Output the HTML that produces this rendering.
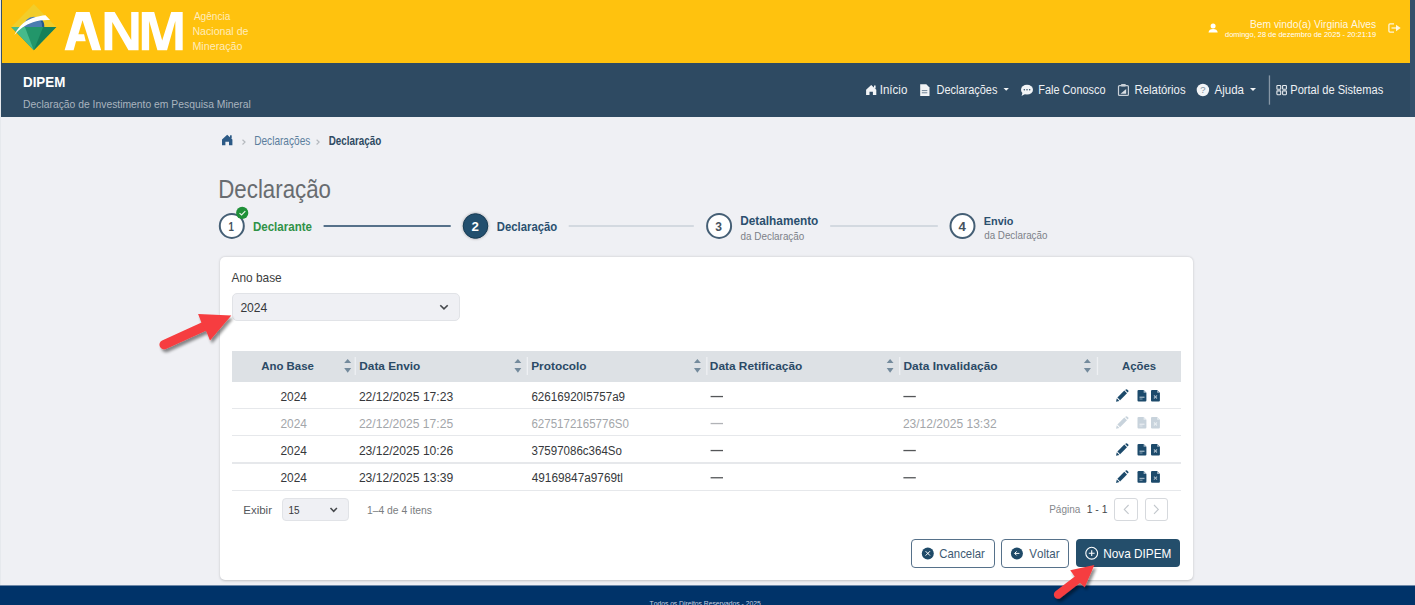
<!DOCTYPE html>
<html><head><meta charset="utf-8">
<style>
*{margin:0;padding:0;box-sizing:border-box}
html,body{width:1415px;height:605px;overflow:hidden}
body{font-family:"Liberation Sans",sans-serif;background:#eff0f4;position:relative;color:#333}
.a{position:absolute}
svg text{font-family:"Liberation Sans",sans-serif;font-kerning:none;white-space:pre}
</style></head><body>
<div class="a" style="left:0;top:0;width:1415px;height:62.5px;background:#ffc20e"></div>
<div class="a" style="left:0;top:62.5px;width:1415px;height:54.5px;background:#2e4a62"></div>
<div class="a" style="left:1px;top:0;width:1px;height:63px;background:#34506a"></div>
<div class="a" style="left:0;top:0;width:1px;height:605px;background:#e6e9ed"></div>
<div class="a" style="left:0;top:585px;width:1415px;height:20px;background:#003369;border-top:1px solid #6f89a8"></div>
<div class="a" style="left:1409.5px;top:0;width:6px;height:117px;background:#34506b"></div>

<!-- card -->
<div class="a" style="left:220px;top:257px;width:972.6px;height:323px;background:#fff;border-radius:5px;box-shadow:0 0.5px 2.5px rgba(0,0,0,.2)"></div>
<!-- select -->
<div class="a" style="left:232.3px;top:292.8px;width:227.6px;height:28.7px;background:#eff0f4;border:1px solid #e1e3e7;border-radius:5px"></div>
<!-- table header -->
<div class="a" style="left:231.9px;top:350.8px;width:948.8px;height:31.2px;background:#dde1e5"></div>
<div class="a" style="left:231.9px;top:408px;width:948.8px;height:1.3px;background:#e6e8eb"></div>
<div class="a" style="left:231.9px;top:435.1px;width:948.8px;height:1.3px;background:#e6e8eb"></div>
<div class="a" style="left:231.9px;top:462.4px;width:948.8px;height:1.3px;background:#e6e8eb"></div>
<div class="a" style="left:231.9px;top:489.7px;width:948.8px;height:1.3px;background:#e6e8eb"></div>
<!-- page size select -->
<div class="a" style="left:282.2px;top:498.2px;width:66.8px;height:22.7px;background:#eff0f4;border:1px solid #e1e3e7;border-radius:4px"></div>
<!-- pager buttons -->
<div class="a" style="left:1114.2px;top:497.6px;width:23.9px;height:23.2px;border:1.3px solid #d6d9dd;border-radius:3px"></div>
<div class="a" style="left:1144.5px;top:497.6px;width:23.8px;height:23.2px;border:1.3px solid #d6d9dd;border-radius:3px"></div>
<!-- buttons -->
<div class="a" style="left:911.2px;top:539px;width:83.7px;height:28.5px;border:1.3px solid #56718a;border-radius:4px"></div>
<div class="a" style="left:1001.2px;top:539px;width:68.2px;height:28.5px;border:1.3px solid #56718a;border-radius:4px"></div>
<div class="a" style="left:1076.2px;top:538.9px;width:104.2px;height:28.3px;background:#244e6b;border-radius:4px"></div>

<svg class="a" style="left:0;top:0" width="1415" height="605" viewBox="0 0 1415 605">
<defs>
  <filter id="sh" x="-30%" y="-30%" width="160%" height="160%"><feGaussianBlur in="SourceAlpha" stdDeviation="1.6"/><feOffset dx="1.5" dy="2.5"/><feComponentTransfer><feFuncA type="linear" slope="0.45"/></feComponentTransfer><feMerge><feMergeNode/><feMergeNode in="SourceGraphic"/></feMerge></filter>
  <filter id="glow" x="-50%" y="-50%" width="200%" height="200%"><feGaussianBlur in="SourceAlpha" stdDeviation="1.5"/><feComponentTransfer><feFuncA type="linear" slope="0.35"/></feComponentTransfer><feMerge><feMergeNode/><feMergeNode in="SourceGraphic"/></feMerge></filter>
</defs>
<!-- logo -->
<polygon points="33.8,4.1 56.3,27.1 11.3,27.1" fill="#f2cd2a"/>
<path d="M23.6,27.1 A10.3,10.3 0 0 1 44.2,27.1 Z" fill="#4a7db0"/>
<path d="M41.5,19 A10.3,10.3 0 0 1 44.2,27.1 L42.2,27.1 A9,9 0 0 0 40,20 Z" fill="#24598c"/>
<polygon points="11.3,27.1 56.3,27.1 33.8,50.2" fill="#22966a"/>
<polygon points="11.3,27.1 24.9,27.1 33.8,50.2" fill="#46ba8b"/>
<polygon points="43.2,27.1 56.3,27.1 33.8,50.2" fill="#168059"/>
<path d="M14.4,35.1 C17,29 23,21.5 32,18.3 C37,16.5 42,15.5 45.5,15.3 L50.1,20.1 C44,19.8 38,20.5 33,22.3 C25,25 19,29.5 14.4,35.1 Z" fill="#ffffff"/>
<g transform="translate(60,5) scale(0.0919)" fill="#ffffff">
<polygon points="50,492 175,75 322,75 448,492 350,492 245,165 200,318 262,318 280,395 175,395 148,492"/>
<polygon points="485,492 485,75 595,75 775,380 775,75 855,75 855,492 745,492 569,185 569,492"/>
<polygon points="890,492 890,75 1025,75 1112,385 1210,75 1335,75 1335,492 1255,492 1255,175 1165,492 1060,492 970,175 970,492"/>
</g>
<!-- user icon -->
<circle cx="1213.1" cy="25.9" r="2.5" fill="#fff"/>
<path d="M1208.5,32.5 C1208.8,29.9 1210.5,28.9 1213.1,28.9 C1215.7,28.9 1217.4,29.9 1217.7,32.5 Z" fill="#fff"/>
<!-- logout -->
<g fill="none" stroke="rgba(255,255,255,.85)" stroke-width="1.3">
<path d="M1394,23.9 H1390 Q1388.9,23.9 1388.9,25 V31 Q1388.9,32.1 1390,32.1 H1394"/>
<path d="M1391.5,28 H1397"/>
</g>
<polygon points="1396,24.8 1400.7,28 1396,31.2" fill="rgba(255,255,255,.85)"/>

<!-- nav icons -->
<g fill="#f2f4f6">
<path d="M871.2,85 L876.3,89.8 L876.3,95 L872.9,95 L872.9,91.7 L869.5,91.7 L869.5,95 L866.1,95 L866.1,89.8 Z"/>
<rect x="874" y="85.5" width="1.6" height="3" />
<path d="M920.2,84.2 H926.3 L929.5,87.4 V96 H920.2 Z"/>
<ellipse cx="1027" cy="89.7" rx="6" ry="4.9"/>
<path d="M1022.5,92.5 L1021.6,96 L1025.5,93.8 Z"/>
<circle cx="1202.9" cy="90" r="6.2"/>
<polygon points="1003.5,88 1008.9,88 1006.2,90.8"/>
<polygon points="1250,88 1256,88 1253,91"/>
</g>
<g fill="#7d8fa0"><rect x="921.8" y="90" width="5.5" height="1.1"/><rect x="921.8" y="92.2" width="5.5" height="1.1"/></g>
<g fill="#2e4a62"><circle cx="1024.3" cy="89.8" r="0.75"/><circle cx="1027" cy="89.8" r="0.75"/><circle cx="1029.7" cy="89.8" r="0.75"/></g>
<text x="1202.9" y="93.4" font-size="9.5" fill="#7f90a0" text-anchor="middle">?</text>
<g fill="none" stroke="#c9d0d7" stroke-width="1.2">
<rect x="1118.5" y="85.6" width="9.9" height="9.8" rx="1"/>
<rect x="1274" y="0" width="0" height="0"/>
</g>
<rect x="1121" y="84" width="4.8" height="2.6" rx="0.8" fill="#c9d0d7"/>
<polygon points="1120.5,93.7 1126.2,89 1126.2,93.7" fill="#d9dee3"/>
<rect x="1268.8" y="75.4" width="1.3" height="29.3" fill="#8797a6"/>
<g fill="none" stroke="#e6eaee" stroke-width="1.1">
<rect x="1276.9" y="85.5" width="3.8" height="3.8" rx="0.6"/>
<rect x="1282.6" y="85.5" width="3.8" height="3.8" rx="0.6"/>
<rect x="1276.9" y="90.9" width="3.8" height="3.8" rx="0.6"/>
<rect x="1282.6" y="90.9" width="3.8" height="3.8" rx="0.6"/>
</g>

<!-- breadcrumb -->
<path d="M227.2,134.7 L232.4,139.6 L232.4,145.3 L229,145.3 L229,141.8 L225.4,141.8 L225.4,145.3 L222,145.3 L222,139.6 Z" fill="#2c5a86"/>
<rect x="230" y="135.3" width="1.7" height="3.2" fill="#2c5a86"/>
<path d="M242.5,139.8 L245,142.1 L242.5,144.5" fill="none" stroke="#b5b9be" stroke-width="1.2"/>
<path d="M316.6,139.8 L319.1,142.1 L316.6,144.5" fill="none" stroke="#b5b9be" stroke-width="1.2"/>

<!-- stepper -->
<rect x="323.6" y="225" width="127.1" height="2" fill="#56718a"/>
<rect x="568.7" y="225" width="125.1" height="2" fill="#d3d9e0"/>
<rect x="830.2" y="225" width="107.6" height="2" fill="#d3d9e0"/>
<circle cx="231.8" cy="225.9" r="12" fill="#fff" stroke="#455f75" stroke-width="2"/>
<circle cx="475.5" cy="226" r="12.3" fill="#234f6e" stroke="#183b53" stroke-width="1" filter="url(#glow)"/>
<circle cx="719.1" cy="225.9" r="12" fill="#fff" stroke="#455f75" stroke-width="2"/>
<circle cx="962.5" cy="226" r="12" fill="#fff" stroke="#455f75" stroke-width="2"/>
<circle cx="242.2" cy="212.9" r="6.1" fill="#1f9038"/>
<path d="M239.5,213.1 L241.6,215 L245.3,211.2" fill="none" stroke="#e8f3ea" stroke-width="1.2"/>

<!-- select chevrons -->
<path d="M440.3,305.2 L444,308.8 L447.7,305.2" fill="none" stroke="#45484c" stroke-width="1.6"/>
<path d="M330.5,508 L333.7,511.3 L336.9,508" fill="none" stroke="#45484c" stroke-width="1.5"/>
<!-- pager chevrons -->
<path d="M1128.6,505 L1124.3,509.4 L1128.6,513.8" fill="none" stroke="#c2c7cc" stroke-width="1.1"/>
<path d="M1154,505 L1158.3,509.4 L1154,513.8" fill="none" stroke="#c2c7cc" stroke-width="1.1"/>

<!-- sort icons -->
<g fill="#738a9c">
<polygon points="344.2,363 351.2,363 347.7,358.9"/><polygon points="344.2,368 351.2,368 347.7,372.8"/>
<polygon points="514.4,363 521.3,363 517.9,358.9"/><polygon points="514.4,368 521.3,368 517.9,372.8"/>
<polygon points="694,363 700.9,363 697.4,358.9"/><polygon points="694,368 700.9,368 697.4,372.8"/>
<polygon points="886.7,363 893.5,363 890.1,358.9"/><polygon points="886.7,368 893.5,368 890.1,372.8"/>
<polygon points="1083.9,363 1090.9,363 1087.4,358.9"/><polygon points="1083.9,368 1090.9,368 1087.4,372.8"/>
</g>
<g fill="#eef0f3">
<rect x="354.6" y="357" width="1.3" height="18"/>
<rect x="526.7" y="357" width="1.3" height="18"/>
<rect x="706.2" y="357" width="1.3" height="18"/>
<rect x="899" y="357" width="1.3" height="18"/>
<rect x="1096.8" y="357" width="1.3" height="18"/>
</g>

<!-- action icons -->
<g transform="translate(0,0.0)"><g fill="#1c4a6b">
<path d="M1116,401.7 L1116.8,398.2 L1119.4,400.9 Z"/>
<path d="M1117.4,397.5 L1124.3,390.6 L1127,393.3 L1120.1,400.2 Z"/>
<path d="M1125.1,389.9 L1125.9,389.4 Q1126.5,388.9 1127.1,389.4 L1128.3,390.6 Q1128.8,391.2 1128.3,391.8 L1127.6,392.4 Z"/>
<path d="M1138.6,389.9 H1143.6 L1146.4,392.7 V400.5 Q1146.4,401.6 1145.3,401.6 H1138.6 Q1137.5,401.6 1137.5,400.5 V391 Q1137.5,389.9 1138.6,389.9 Z"/>
<path d="M1152.1,389.9 H1157.1 L1159.9,392.7 V400.5 Q1159.9,401.6 1158.8,401.6 H1152.1 Q1151,401.6 1151,400.5 V391 Q1151,389.9 1152.1,389.9 Z"/>
</g><g fill="#9fb3c3"><path d="M1143.6,389.9 V392.7 H1146.4 Z"/><path d="M1157.1,389.9 V392.7 H1159.9 Z"/><rect x="1139.5" y="396.6" width="5" height="1.3"/><rect x="1139.5" y="398.6" width="3" height="0.8"/></g>
<path d="M1153.9,395.4 L1157,398.5 M1157,395.4 L1153.9,398.5" stroke="#9fb3c3" stroke-width="1.1"/></g>
<g transform="translate(0,27.0)"><g fill="#c8d3dc">
<path d="M1116,401.7 L1116.8,398.2 L1119.4,400.9 Z"/>
<path d="M1117.4,397.5 L1124.3,390.6 L1127,393.3 L1120.1,400.2 Z"/>
<path d="M1125.1,389.9 L1125.9,389.4 Q1126.5,388.9 1127.1,389.4 L1128.3,390.6 Q1128.8,391.2 1128.3,391.8 L1127.6,392.4 Z"/>
<path d="M1138.6,389.9 H1143.6 L1146.4,392.7 V400.5 Q1146.4,401.6 1145.3,401.6 H1138.6 Q1137.5,401.6 1137.5,400.5 V391 Q1137.5,389.9 1138.6,389.9 Z"/>
<path d="M1152.1,389.9 H1157.1 L1159.9,392.7 V400.5 Q1159.9,401.6 1158.8,401.6 H1152.1 Q1151,401.6 1151,400.5 V391 Q1151,389.9 1152.1,389.9 Z"/>
</g><g fill="#e6ecf0"><path d="M1143.6,389.9 V392.7 H1146.4 Z"/><path d="M1157.1,389.9 V392.7 H1159.9 Z"/><rect x="1139.5" y="396.6" width="5" height="1.3"/><rect x="1139.5" y="398.6" width="3" height="0.8"/></g>
<path d="M1153.9,395.4 L1157,398.5 M1157,395.4 L1153.9,398.5" stroke="#e6ecf0" stroke-width="1.1"/></g>
<g transform="translate(0,54.0)"><g fill="#1c4a6b">
<path d="M1116,401.7 L1116.8,398.2 L1119.4,400.9 Z"/>
<path d="M1117.4,397.5 L1124.3,390.6 L1127,393.3 L1120.1,400.2 Z"/>
<path d="M1125.1,389.9 L1125.9,389.4 Q1126.5,388.9 1127.1,389.4 L1128.3,390.6 Q1128.8,391.2 1128.3,391.8 L1127.6,392.4 Z"/>
<path d="M1138.6,389.9 H1143.6 L1146.4,392.7 V400.5 Q1146.4,401.6 1145.3,401.6 H1138.6 Q1137.5,401.6 1137.5,400.5 V391 Q1137.5,389.9 1138.6,389.9 Z"/>
<path d="M1152.1,389.9 H1157.1 L1159.9,392.7 V400.5 Q1159.9,401.6 1158.8,401.6 H1152.1 Q1151,401.6 1151,400.5 V391 Q1151,389.9 1152.1,389.9 Z"/>
</g><g fill="#9fb3c3"><path d="M1143.6,389.9 V392.7 H1146.4 Z"/><path d="M1157.1,389.9 V392.7 H1159.9 Z"/><rect x="1139.5" y="396.6" width="5" height="1.3"/><rect x="1139.5" y="398.6" width="3" height="0.8"/></g>
<path d="M1153.9,395.4 L1157,398.5 M1157,395.4 L1153.9,398.5" stroke="#9fb3c3" stroke-width="1.1"/></g>
<g transform="translate(0,81.19999999999999)"><g fill="#1c4a6b">
<path d="M1116,401.7 L1116.8,398.2 L1119.4,400.9 Z"/>
<path d="M1117.4,397.5 L1124.3,390.6 L1127,393.3 L1120.1,400.2 Z"/>
<path d="M1125.1,389.9 L1125.9,389.4 Q1126.5,388.9 1127.1,389.4 L1128.3,390.6 Q1128.8,391.2 1128.3,391.8 L1127.6,392.4 Z"/>
<path d="M1138.6,389.9 H1143.6 L1146.4,392.7 V400.5 Q1146.4,401.6 1145.3,401.6 H1138.6 Q1137.5,401.6 1137.5,400.5 V391 Q1137.5,389.9 1138.6,389.9 Z"/>
<path d="M1152.1,389.9 H1157.1 L1159.9,392.7 V400.5 Q1159.9,401.6 1158.8,401.6 H1152.1 Q1151,401.6 1151,400.5 V391 Q1151,389.9 1152.1,389.9 Z"/>
</g><g fill="#9fb3c3"><path d="M1143.6,389.9 V392.7 H1146.4 Z"/><path d="M1157.1,389.9 V392.7 H1159.9 Z"/><rect x="1139.5" y="396.6" width="5" height="1.3"/><rect x="1139.5" y="398.6" width="3" height="0.8"/></g>
<path d="M1153.9,395.4 L1157,398.5 M1157,395.4 L1153.9,398.5" stroke="#9fb3c3" stroke-width="1.1"/></g>

<!-- button icons -->
<circle cx="927.8" cy="553.4" r="6" fill="#1f4a68"/>
<path d="M925.6,551.2 L930,555.6 M930,551.2 L925.6,555.6" stroke="#fff" stroke-width="1"/>
<circle cx="1016.9" cy="553.4" r="6" fill="#1f4a68"/>
<path d="M1019.4,553.4 H1014.8 M1016.6,551.4 L1014.6,553.4 L1016.6,555.4" fill="none" stroke="#fff" stroke-width="1"/>
<circle cx="1091.7" cy="553.2" r="5.9" fill="none" stroke="#fff" stroke-width="1.1"/>
<path d="M1091.7,550.3 V556.1 M1088.8,553.2 H1094.6" stroke="#fff" stroke-width="1.1"/>

<text x="193.88" y="19.50" font-size="10.76" textLength="36.42" lengthAdjust="spacingAndGlyphs" fill="rgba(255,255,255,.72)" >Agência</text>
<text x="192.43" y="34.60" font-size="10.61" textLength="56.04" lengthAdjust="spacingAndGlyphs" fill="rgba(255,255,255,.72)" >Nacional de</text>
<text x="192.42" y="50.00" font-size="10.76" textLength="50.03" lengthAdjust="spacingAndGlyphs" fill="rgba(255,255,255,.72)" >Mineração</text>
<text x="1249.96" y="27.60" font-size="10.47" textLength="126.21" lengthAdjust="spacingAndGlyphs" fill="rgba(255,255,255,.9)" >Bem vindo(a) Virginia Alves</text>
<text x="1225.09" y="37.00" font-size="7.12" textLength="151.07" lengthAdjust="spacingAndGlyphs" fill="#ffffff" >domingo, 28 de dezembro de 2025 - 20:21:19</text>
<text x="23.01" y="87.40" font-size="14.24" textLength="42.29" lengthAdjust="spacingAndGlyphs" fill="#ffffff" font-weight="bold" >DIPEM</text>
<text x="23.05" y="107.70" font-size="10.47" textLength="227.64" lengthAdjust="spacingAndGlyphs" fill="#a9b4bf" >Declaração de Investimento em Pesquisa Mineral</text>
<text x="879.73" y="94.40" font-size="12.35" textLength="27.65" lengthAdjust="spacingAndGlyphs" fill="#eef1f4" >Início</text>
<text x="936.50" y="94.30" font-size="12.35" textLength="60.89" lengthAdjust="spacingAndGlyphs" fill="#eef1f4" >Declarações</text>
<text x="1038.31" y="94.30" font-size="12.35" textLength="67.15" lengthAdjust="spacingAndGlyphs" fill="#eef1f4" >Fale Conosco</text>
<text x="1134.57" y="94.30" font-size="12.35" textLength="51.04" lengthAdjust="spacingAndGlyphs" fill="#eef1f4" >Relatórios</text>
<text x="1214.58" y="94.30" font-size="12.35" textLength="29.42" lengthAdjust="spacingAndGlyphs" fill="#eef1f4" >Ajuda</text>
<text x="1290.29" y="94.00" font-size="12.50" textLength="92.91" lengthAdjust="spacingAndGlyphs" fill="#eef1f4" >Portal de Sistemas</text>
<text x="254.17" y="145.00" font-size="11.92" textLength="56.19" lengthAdjust="spacingAndGlyphs" fill="#5b7e9d" >Declarações</text>
<text x="328.64" y="145.00" font-size="11.92" textLength="52.65" lengthAdjust="spacingAndGlyphs" fill="#2e4a62" font-weight="bold" >Declaração</text>
<text x="218.27" y="197.60" font-size="25.87" textLength="112.76" lengthAdjust="spacingAndGlyphs" fill="#686c70" >Declaração</text>
<text x="252.93" y="230.70" font-size="13.08" textLength="59.07" lengthAdjust="spacingAndGlyphs" fill="#2f9247" font-weight="bold" >Declarante</text>
<text x="496.84" y="230.70" font-size="12.79" textLength="60.40" lengthAdjust="spacingAndGlyphs" fill="#2b5070" font-weight="bold" >Declaração</text>
<text x="740.21" y="224.90" font-size="12.06" textLength="78.15" lengthAdjust="spacingAndGlyphs" fill="#2b4f6e" font-weight="bold" >Detalhamento</text>
<text x="740.58" y="239.50" font-size="11.34" textLength="63.73" lengthAdjust="spacingAndGlyphs" fill="#7c8088" >da Declaração</text>
<text x="983.87" y="224.80" font-size="11.63" textLength="29.55" lengthAdjust="spacingAndGlyphs" fill="#2b4f6e" font-weight="bold" >Envio</text>
<text x="984.19" y="239.20" font-size="11.34" textLength="63.22" lengthAdjust="spacingAndGlyphs" fill="#7c8088" >da Declaração</text>
<text x="228.59" y="230.60" font-size="12.21" textLength="5.38" lengthAdjust="spacingAndGlyphs" fill="#45525e" font-weight="bold" >1</text>
<text x="471.44" y="230.90" font-size="13.08" textLength="7.39" lengthAdjust="spacingAndGlyphs" fill="#ffffff" font-weight="bold" >2</text>
<text x="715.32" y="230.60" font-size="12.21" textLength="6.71" lengthAdjust="spacingAndGlyphs" fill="#45525e" font-weight="bold" >3</text>
<text x="958.50" y="230.60" font-size="12.21" textLength="7.37" lengthAdjust="spacingAndGlyphs" fill="#45525e" font-weight="bold" >4</text>
<text x="231.48" y="282.30" font-size="12.35" textLength="50.25" lengthAdjust="spacingAndGlyphs" fill="#3b3d40" >Ano base</text>
<text x="240.39" y="311.90" font-size="13.08" textLength="26.96" lengthAdjust="spacingAndGlyphs" fill="#36383b" >2024</text>
<text x="261.22" y="370.20" font-size="11.77" textLength="52.67" lengthAdjust="spacingAndGlyphs" fill="#2b4a66" font-weight="bold" >Ano Base</text>
<text x="359.31" y="370.10" font-size="11.77" textLength="61.05" lengthAdjust="spacingAndGlyphs" fill="#2b4a66" font-weight="bold" >Data Envio</text>
<text x="531.21" y="370.10" font-size="11.77" textLength="55.36" lengthAdjust="spacingAndGlyphs" fill="#2b4a66" font-weight="bold" >Protocolo</text>
<text x="709.81" y="370.10" font-size="11.77" textLength="92.46" lengthAdjust="spacingAndGlyphs" fill="#2b4a66" font-weight="bold" >Data Retificação</text>
<text x="903.50" y="370.10" font-size="11.77" textLength="94.06" lengthAdjust="spacingAndGlyphs" fill="#2b4a66" font-weight="bold" >Data Invalidação</text>
<text x="1122.12" y="370.10" font-size="11.77" textLength="34.05" lengthAdjust="spacingAndGlyphs" fill="#2b4a66" font-weight="bold" >Ações</text>
<text x="280.50" y="400.50" font-size="12.65" textLength="26.45" lengthAdjust="spacingAndGlyphs" fill="#36383b" >2024</text>
<text x="358.89" y="400.50" font-size="12.65" textLength="94.34" lengthAdjust="spacingAndGlyphs" fill="#36383b" >22/12/2025 17:23</text>
<text x="531.41" y="400.50" font-size="12.65" textLength="93.64" lengthAdjust="spacingAndGlyphs" fill="#36383b" >62616920I5757a9</text>
<text x="280.50" y="427.50" font-size="12.65" textLength="26.45" lengthAdjust="spacingAndGlyphs" fill="#a3a6aa" >2024</text>
<text x="358.89" y="427.50" font-size="12.65" textLength="94.32" lengthAdjust="spacingAndGlyphs" fill="#a3a6aa" >22/12/2025 17:25</text>
<text x="531.41" y="427.50" font-size="12.65" textLength="97.54" lengthAdjust="spacingAndGlyphs" fill="#a3a6aa" >6275172165776S0</text>
<text x="902.89" y="427.50" font-size="12.65" textLength="93.71" lengthAdjust="spacingAndGlyphs" fill="#a3a6aa" >23/12/2025 13:32</text>
<text x="280.50" y="454.50" font-size="12.65" textLength="26.45" lengthAdjust="spacingAndGlyphs" fill="#36383b" >2024</text>
<text x="358.89" y="454.50" font-size="12.65" textLength="94.34" lengthAdjust="spacingAndGlyphs" fill="#36383b" >23/12/2025 10:26</text>
<text x="531.56" y="454.50" font-size="12.65" textLength="90.42" lengthAdjust="spacingAndGlyphs" fill="#36383b" >37597086c364So</text>
<text x="280.50" y="481.70" font-size="12.65" textLength="26.45" lengthAdjust="spacingAndGlyphs" fill="#36383b" >2024</text>
<text x="358.89" y="481.70" font-size="12.65" textLength="94.38" lengthAdjust="spacingAndGlyphs" fill="#36383b" >23/12/2025 13:39</text>
<text x="531.73" y="481.70" font-size="12.65" textLength="91.26" lengthAdjust="spacingAndGlyphs" fill="#36383b" >49169847a9769tl</text>
<text x="243.26" y="513.70" font-size="11.77" textLength="28.73" lengthAdjust="spacingAndGlyphs" fill="#55585c" >Exibir</text>
<text x="288.44" y="513.70" font-size="11.77" textLength="11.08" lengthAdjust="spacingAndGlyphs" fill="#36383b" >15</text>
<text x="367.01" y="513.70" font-size="11.77" textLength="64.96" lengthAdjust="spacingAndGlyphs" fill="#7a7d81" >1–4 de 4 itens</text>
<text x="1049.18" y="513.10" font-size="11.48" textLength="31.12" lengthAdjust="spacingAndGlyphs" fill="#85888c" >Página</text>
<text x="1086.71" y="513.10" font-size="11.48" textLength="20.80" lengthAdjust="spacingAndGlyphs" fill="#45484c" >1 - 1</text>
<text x="939.32" y="557.90" font-size="12.94" textLength="45.47" lengthAdjust="spacingAndGlyphs" fill="#3d5a73" >Cancelar</text>
<text x="1029.35" y="557.90" font-size="12.94" textLength="30.24" lengthAdjust="spacingAndGlyphs" fill="#3d5a73" >Voltar</text>
<text x="1103.23" y="557.50" font-size="12.94" textLength="68.13" lengthAdjust="spacingAndGlyphs" fill="#ffffff" >Nova DIPEM</text>
<text x="649.55" y="605.50" font-size="7.70" textLength="111.13" lengthAdjust="spacingAndGlyphs" fill="#c8d2e0" >Todos os Direitos Reservados - 2025</text>
<rect x="710.6" y="395.9" width="12.4" height="1.3" fill="#36383b" opacity=".85"/>
<rect x="903.4" y="395.9" width="12.4" height="1.3" fill="#36383b" opacity=".85"/>
<rect x="710.6" y="422.9" width="12.4" height="1.3" fill="#a3a6aa" opacity=".85"/>
<rect x="710.6" y="449.9" width="12.4" height="1.3" fill="#36383b" opacity=".85"/>
<rect x="903.4" y="449.9" width="12.4" height="1.3" fill="#36383b" opacity=".85"/>
<rect x="710.6" y="477.1" width="12.4" height="1.3" fill="#36383b" opacity=".85"/>
<rect x="903.4" y="477.1" width="12.4" height="1.3" fill="#36383b" opacity=".85"/>

<!-- arrows -->
<g filter="url(#sh)" fill="#f63e3f">
<path d="M164,344.7 L204,326.5" stroke="#f63e3f" stroke-width="9.2" stroke-linecap="round"/>
<polygon points="231.3,315.4 198.1,313.9 201.8,323.5 206.8,332.5 210,340.4"/>
<path d="M1058,594.6 L1077,580" stroke="#f63e3f" stroke-width="8.3" stroke-linecap="round"/>
<polygon points="1094.4,565.1 1070.2,570.3 1074.3,576.1 1080.1,583.1 1084.7,587.2"/>
</g>
</svg>
</body></html>
